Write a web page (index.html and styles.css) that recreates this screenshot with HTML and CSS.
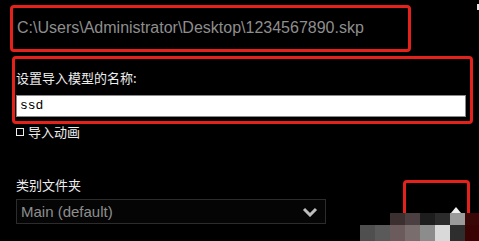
FILE: index.html
```html
<!DOCTYPE html>
<html>
<head>
<meta charset="utf-8">
<link rel="stylesheet" href="styles.css">
</head>
<body>
<div class="page">
  <div class="path-box"><span class="path-text">C:\Users\Administrator\Desktop\1234567890.skp</span></div>
  <div class="name-box">
    <div class="name-label">设置导入模型的名称:</div>
    <div class="name-input">ssd</div>
  </div>
  <div class="check-row"><span class="check"></span><span class="check-label">导入动画</span></div>
  <div class="cat-label">类别文件夹</div>
  <div class="select">
    <span class="select-text">Main (default)</span>
    <svg class="chevron" width="16" height="10" viewBox="0 0 16 10"><path d="M2 2 L8 8 L14 2" fill="none" stroke="#bdbdbd" stroke-width="3"/></svg>
  </div>
  <span class="corner-glyph"></span>
  <div class="mark-box"></div>
  <svg class="up-arrow" width="10" height="6" viewBox="0 0 10 6"><path d="M0 6 L5 0 L10 6 Z" fill="#f2f2f2"/></svg>
  <div class="mosaic">
    <div class="mrow r1">
      <i style="background:#3b2f30"></i><i style="background:#4b3f41"></i><i style="background:#1d1d1d"></i><i style="background:#2b2b2b"></i><i style="background:#9b9b9b"></i><i style="background:#3a0707"></i>
    </div>
    <div class="mrow r2">
      <i style="background:#4f4f4f"></i><i style="background:#5a5a5a"></i><i style="background:#6b5b5c"></i><i style="background:#7a6d6e"></i><i style="background:#8c8c8c"></i><i style="background:#d9d9d9"></i><i style="background:#2e2e2e"></i><i style="background:#3a0303"></i>
    </div>
  </div>
</div>
</body>
</html>
```
FILE: styles.css
```css
html, body {
  margin: 0;
  padding: 0;
  background: #000;
  width: 479px;
  height: 241px;
  overflow: hidden;
}
.page {
  position: relative;
  width: 479px;
  height: 241px;
  overflow: hidden;
  background: #000;
  font-family: "Liberation Sans", "Noto Sans CJK SC", sans-serif;
}
.path-box {
  box-sizing: border-box;
  margin: 5px 0 0 10px;
  width: 401px;
  height: 47px;
  border: 3px solid #e4221b;
  border-radius: 4px;
  padding: 0 0 0 4px;
  display: flex;
  align-items: center;
}
.path-text {
  color: #8e8e8e;
  font-size: 16px;
  line-height: 18px;
  margin-top: -2px;
}
.name-box {
  box-sizing: border-box;
  margin: 4px 0 0 12px;
  width: 461px;
  height: 68px;
  border: 3px solid #e4221b;
  border-radius: 4px;
  padding: 10px 4px 0 1px;
}
.name-label {
  color: #ededed;
  font-family: "Noto Sans CJK SC", sans-serif;
  font-size: 13px;
  line-height: 17px;
  height: 26px;
}
.name-input {
  box-sizing: border-box;
  height: 22px;
  background: #fff;
  border: 1px solid #8a8a8a;
  color: #000;
  font-family: "Liberation Mono", "DejaVu Sans Mono", monospace;
  font-size: 13px;
  line-height: 19px;
  padding-left: 3px;
}
.check-row {
  display: flex;
  align-items: center;
  margin: 0 0 0 16px;
  height: 16px;
}
.check {
  box-sizing: border-box;
  width: 8px;
  height: 8px;
  border: 1px solid #f0f0f0;
  margin-right: 4px;
}
.check-label {
  color: #ededed;
  font-family: "Noto Sans CJK SC", sans-serif;
  font-size: 13px;
  line-height: 16px;
}
.cat-label {
  margin: 35px 0 0 16px;
  color: #ededed;
  font-family: "Noto Sans CJK SC", sans-serif;
  font-size: 13px;
  line-height: 20px;
}
.select {
  box-sizing: border-box;
  margin: 4px 0 0 16px;
  width: 310px;
  height: 25px;
  border: 1px solid #2c2c2c;
  background: #050505;
  display: flex;
  align-items: center;
  justify-content: space-between;
  padding: 0 7px 0 4px;
}
.select-text {
  color: #8e8e8e;
  font-size: 15px;
}
.chevron {
  display: block;
}
.corner-glyph {
  position: absolute;
  left: 477px;
  top: 4px;
  width: 2px;
  height: 6px;
  background: #e6e6e6;
}
.mark-box {
  position: absolute;
  left: 403px;
  top: 180px;
  width: 67px;
  height: 80px;
  box-sizing: border-box;
  border: 3px solid #e4221b;
  border-radius: 4px;
}
.up-arrow {
  position: absolute;
  left: 451px;
  top: 207px;
}
.mosaic {
  position: absolute;
  left: 360px;
  top: 213px;
  width: 119px;
}
.mrow {
  display: flex;
}
.mrow i {
  display: block;
  width: 15px;
  flex: none;
}
.r1 {
  margin-left: 30px;
  height: 12px;
}
.r2 {
  height: 16px;
}
```
